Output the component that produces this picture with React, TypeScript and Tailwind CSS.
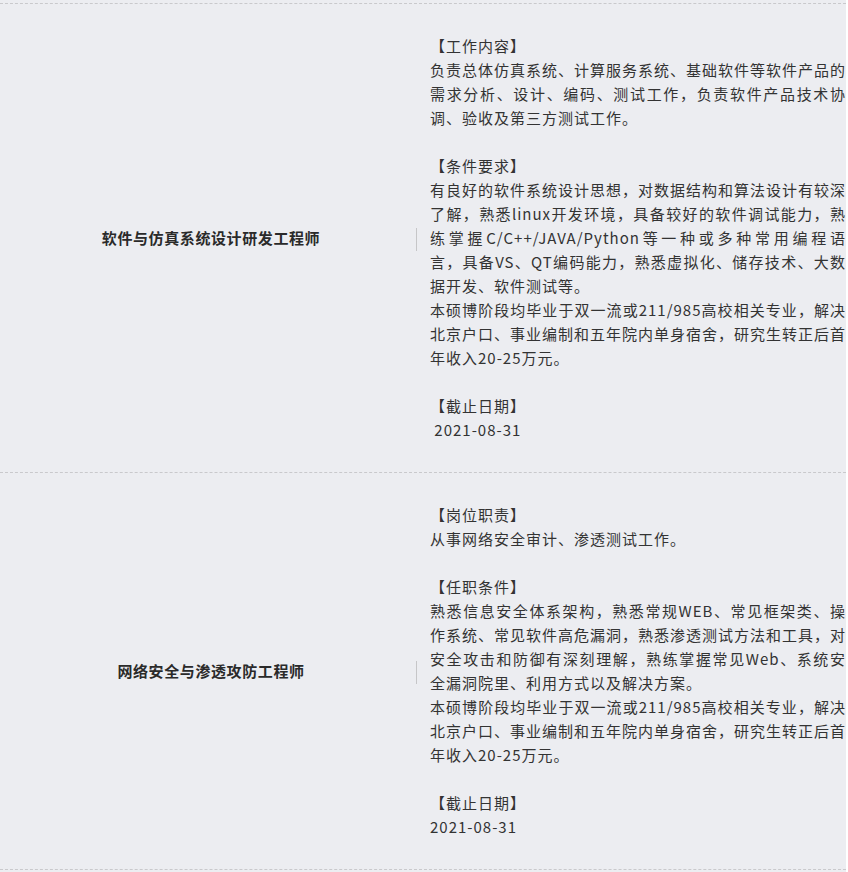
const font = "font-['Noto_Sans_CJK_SC','Noto_Sans',sans-serif]";

type Job = {
  title: string;
  paragraphs: string[][];
};

const jobs: Job[] = [
  {
    title: "软件与仿真系统设计研发工程师",
    paragraphs: [
      ["【工作内容】"],
      [
        "负责总体仿真系统、计算服务系统、基础软件等软件产品的",
        "需求分析、设计、编码、测试工作，负责软件产品技术协",
        "调、验收及第三方测试工作。",
      ],
      [""],
      ["【条件要求】"],
      [
        "有良好的软件系统设计思想，对数据结构和算法设计有较深",
        "了解，熟悉linux开发环境，具备较好的软件调试能力，熟",
        "练掌握C/C++/JAVA/Python等一种或多种常用编程语",
        "言，具备VS、QT编码能力，熟悉虚拟化、储存技术、大数",
        "据开发、软件测试等。",
      ],
      [
        "本硕博阶段均毕业于双一流或211/985高校相关专业，解决",
        "北京户口、事业编制和五年院内单身宿舍，研究生转正后首",
        "年收入20-25万元。",
      ],
      [""],
      ["【截止日期】"],
      ["\u00a02021-08-31"],
    ],
  },
  {
    title: "网络安全与渗透攻防工程师",
    paragraphs: [
      ["【岗位职责】"],
      ["从事网络安全审计、渗透测试工作。"],
      [""],
      ["【任职条件】"],
      [
        "熟悉信息安全体系架构，熟悉常规WEB、常见框架类、操",
        "作系统、常见软件高危漏洞，熟悉渗透测试方法和工具，对",
        "安全攻击和防御有深刻理解，熟练掌握常见Web、系统安",
        "全漏洞院里、利用方式以及解决方案。",
      ],
      [
        "本硕博阶段均毕业于双一流或211/985高校相关专业，解决",
        "北京户口、事业编制和五年院内单身宿舍，研究生转正后首",
        "年收入20-25万元。",
      ],
      [""],
      ["【截止日期】"],
      ["2021-08-31"],
    ],
  },
];

function Paragraph({ lines }: { lines: string[] }) {
  return (
    <div>
      {lines.map((line, i) => (
        <div
          key={i}
          className={
            i < lines.length - 1
              ? "h-[24px] text-justify [text-align-last:justify]"
              : "h-[24px] text-left"
          }
        >
          {line === "" ? "\u00a0" : line}
        </div>
      ))}
    </div>
  );
}

export default function App() {
  return (
    <div className={`w-[848px] min-h-[872px] bg-white ${font}`}>
      <div className="w-[846px] min-h-[872px] bg-[#ecedf1] pt-[3px]">
        {jobs.map((job, idx) => (
          <div
            key={job.title}
            className={`flex border-t border-dashed border-[#c9c9cc] ${
              idx === jobs.length - 1 ? "border-b" : ""
            }`}
          >
            <div className="w-[416px] pl-[6px] flex items-center justify-center">
              <span className="text-[15px] font-bold tracking-[0.6px] text-[#2a2a2a]">
                {job.title}
              </span>
            </div>
            <div className="self-center w-px h-[23px] bg-[#c6c6c8] mt-[3px]" />
            <div className="w-[429px] pl-[13px] py-[30px] text-[15px] leading-[24px] tracking-[1px] text-[#333]">
              {job.paragraphs.map((p, i) => (
                <Paragraph key={i} lines={p} />
              ))}
            </div>
          </div>
        ))}
      </div>
    </div>
  );
}
